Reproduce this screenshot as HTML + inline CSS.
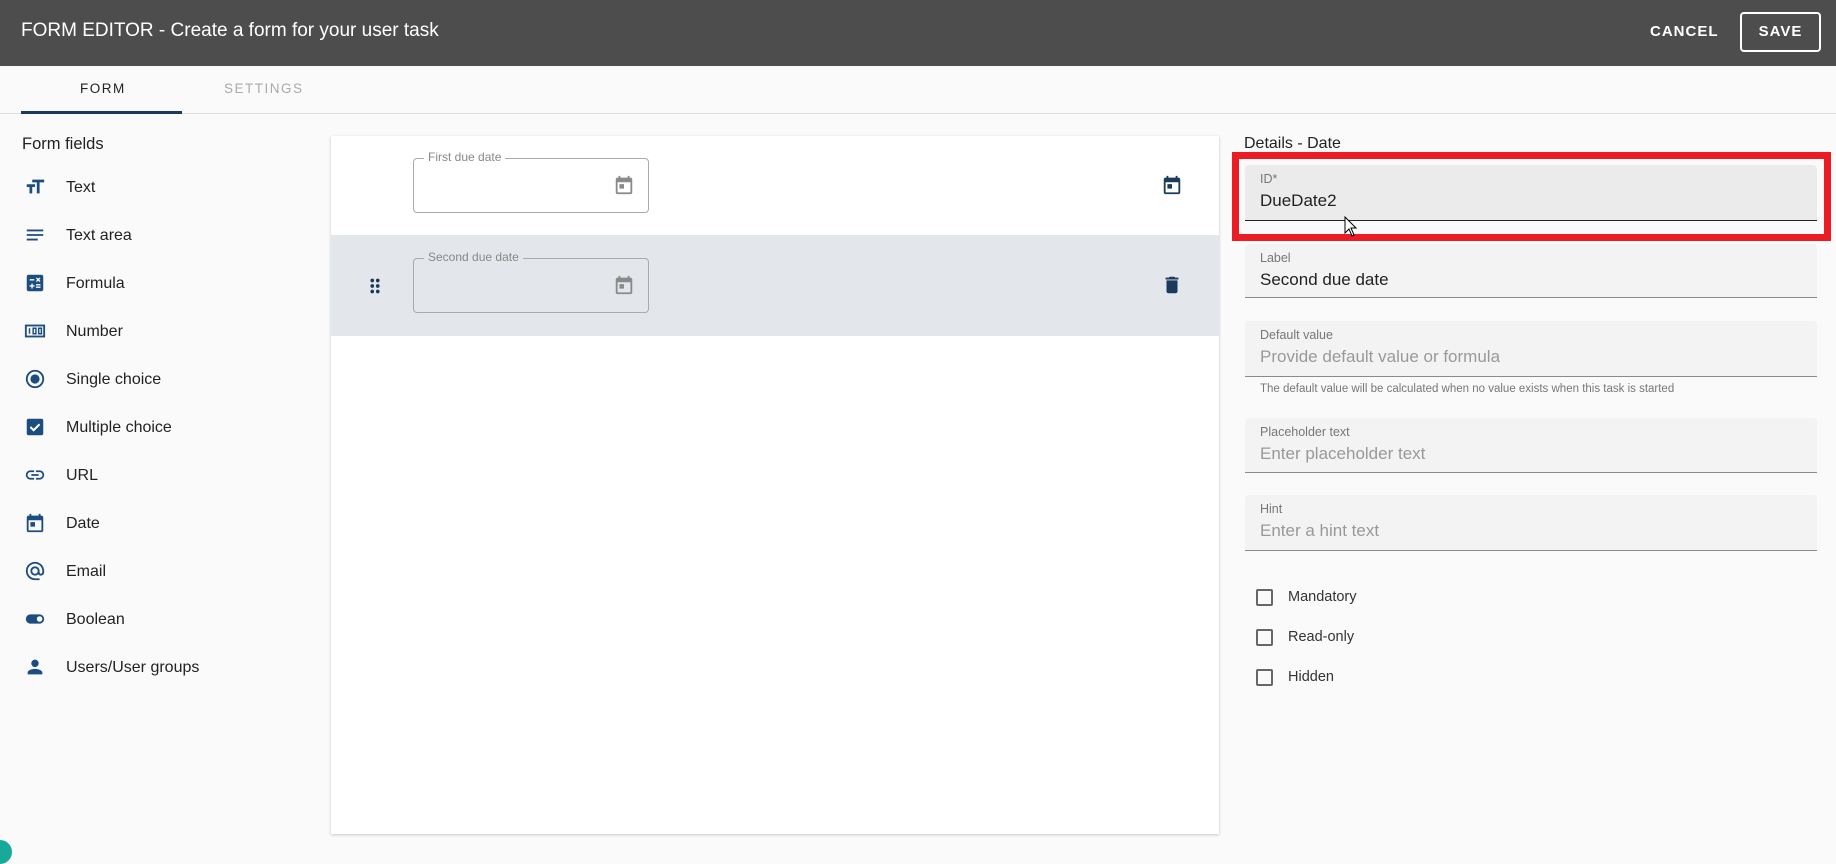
<!DOCTYPE html><html><head><style>
*{box-sizing:border-box;margin:0;padding:0}
body{width:1836px;height:854px;background:#fafafa;font-family:"Liberation Sans",sans-serif;position:relative;overflow:hidden;color:#222}
.a{position:absolute}
.hdr{left:0;top:0;width:1836px;height:66px;background:#4d4d4d}
.fi{left:22px;font-size:16px;color:#222}
.f{left:1245px;width:572px;background:#f3f3f3;border-bottom:1px solid #8a8a8a;border-radius:4px 4px 0 0}
.f .l{position:absolute;left:15px;top:7px;font-size:12.5px;color:#777}
.f .v{position:absolute;left:15px;top:26px;font-size:17px;color:#999}
.cb{left:1256px;width:17px;height:17px;border:2px solid #666;border-radius:2px}
.ct{left:1288px;font-size:14.5px;color:#333}
</style></head><body>
<div class="a hdr"></div>
<div class="a" style="left:21px;top:20px;font-size:19px;color:#fff">FORM EDITOR - Create a form for your user task</div>
<div class="a" style="left:1650px;top:23px;font-size:15px;font-weight:bold;color:#fff;letter-spacing:1px">CANCEL</div>
<div class="a" style="left:1740px;top:12px;width:81px;height:40px;border:2px solid #fff;border-radius:4px;color:#fff;font-size:15px;font-weight:bold;letter-spacing:1px;text-align:center;line-height:36px">SAVE</div>
<div class="a" style="left:80px;top:81px;font-size:13.5px;letter-spacing:1.5px;color:#222">FORM</div>
<div class="a" style="left:224px;top:81px;font-size:13.5px;letter-spacing:1.5px;color:#aaa">SETTINGS</div>
<div class="a" style="left:0;top:113px;width:1836px;height:1px;background:#ddd"></div>
<div class="a" style="left:21px;top:111px;width:161px;height:3px;background:#1b3a5c"></div>
<div class="a fi" style="top:135px;font-size:16.5px">Form fields</div>

<svg class="a" style="left:24px;top:176px" width="22" height="22" viewBox="0 0 24 24" fill="#1b4d7e"><path d="M9 4v3h5v12h3V7h5V4H9zm-6 8h3v7h3v-7h3V9H3v3z"/></svg>
<div class="a fi" style="left:66px;top:179px">Text</div>
<svg class="a" style="left:24px;top:224px" width="22" height="22" viewBox="0 0 24 24" fill="#1b4d7e"><path d="M3 6h18v2H3zM3 11h18v2H3zM3 16h12v2H3z"/></svg>
<div class="a fi" style="left:66px;top:227px">Text area</div>
<svg class="a" style="left:24px;top:272px" width="22" height="22" viewBox="0 0 24 24" fill="#1b4d7e"><path d="M19 3H5c-1.1 0-2 .9-2 2v14c0 1.1.9 2 2 2h14c1.1 0 2-.9 2-2V5c0-1.1-.9-2-2-2zm-5.970 4.060L14.090 6l1.410 1.410L16.910 6l1.060 1.060-1.410 1.410 1.410 1.410-1.060 1.060-1.410-1.400-1.410 1.410-1.060-1.060 1.410-1.410-1.410-1.420zM6.250 7.720h5v1.500h-5v-1.500zM11.500 16h-2v2H8v-2H6v-1.500h2v-2h1.500v2h2V16zm6.500 1.250h-5v-1.500h5v1.500zm0-2.500h-5v-1.500h5v1.500z"/></svg>
<div class="a fi" style="left:66px;top:275px">Formula</div>
<svg class="a" style="left:24px;top:320px" width="22" height="22" viewBox="0 0 24 24" fill="none" stroke="#1b4d7e" stroke-width="2"><rect x="2" y="6" width="20" height="12"/><path d="M6 9v6M10 9h3v6h-3zM16 9h3v6h-3z" stroke-width="1.6"/></svg>
<div class="a fi" style="left:66px;top:323px">Number</div>
<svg class="a" style="left:24px;top:368px" width="22" height="22" viewBox="0 0 24 24"><circle cx="12" cy="12" r="9" fill="none" stroke="#1b4d7e" stroke-width="2"/><circle cx="12" cy="12" r="5" fill="#1b4d7e"/></svg>
<div class="a fi" style="left:66px;top:371px">Single choice</div>
<svg class="a" style="left:24px;top:416px" width="22" height="22" viewBox="0 0 24 24"><rect x="3" y="3" width="18" height="18" rx="2" fill="#1b4d7e"/><path d="M7 12l3.5 3.5L17 9" stroke="#fff" stroke-width="2.2" fill="none"/></svg>
<div class="a fi" style="left:66px;top:419px">Multiple choice</div>
<svg class="a" style="left:24px;top:464px" width="22" height="22" viewBox="0 0 24 24" fill="#1b4d7e"><path d="M3.9 12c0-1.71 1.39-3.1 3.1-3.1h4V7H7c-2.76 0-5 2.24-5 5s2.24 5 5 5h4v-1.9H7c-1.71 0-3.1-1.39-3.1-3.1zM8 13h8v-2H8v2zm9-6h-4v1.9h4c1.71 0 3.1 1.39 3.1 3.1s-1.39 3.1-3.1 3.1h-4V17h4c2.76 0 5-2.24 5-5s-2.240-5-5-5z"/></svg>
<div class="a fi" style="left:66px;top:467px">URL</div>
<svg class="a" style="left:24px;top:512px" width="22" height="22" viewBox="0 0 24 24" fill="#1b4d7e"><path d="M19 4h-1V2h-2v2H8V2H6v2H5c-1.1 0-2 .9-2 2v14c0 1.1.9 2 2 2h14c1.1 0 2-.9 2-2V6c0-1.1-.9-2-2-2zm0 16H5V9h14v11zM7 11h5v5H7z"/></svg>
<div class="a fi" style="left:66px;top:515px">Date</div>
<svg class="a" style="left:24px;top:560px" width="22" height="22" viewBox="0 0 24 24" fill="#1b4d7e"><path d="M12 2C6.48 2 2 6.48 2 12s4.48 10 10 10h5v-2h-5c-4.34 0-8-3.66-8-8s3.66-8 8-8 8 3.66 8 8v1.43c0 .79-.71 1.57-1.5 1.57s-1.5-.78-1.5-1.57V12c0-2.76-2.24-5-5-5s-5 2.24-5 5 2.24 5 5 5c1.38 0 2.64-.56 3.54-1.47.65.89 1.77 1.47 2.96 1.47 1.97 0 3.5-1.6 3.5-3.57V12c0-5.52-4.48-10-10-10zm0 13c-1.66 0-3-1.34-3-3s1.34-3 3-3 3 1.34 3 3-1.34 3-3 3z"/></svg>
<div class="a fi" style="left:66px;top:563px">Email</div>
<svg class="a" style="left:24px;top:608px" width="22" height="22" viewBox="0 0 24 24"><rect x="2" y="7" width="20" height="10" rx="5" fill="#1b4d7e"/><circle cx="17" cy="12" r="3" fill="#fff"/></svg>
<div class="a fi" style="left:66px;top:611px">Boolean</div>
<svg class="a" style="left:24px;top:656px" width="22" height="22" viewBox="0 0 24 24" fill="#1b4d7e"><path d="M12 12c2.21 0 4-1.79 4-4s-1.79-4-4-4-4 1.79-4 4 1.79 4 4 4zm0 2c-2.67 0-8 1.34-8 4v2h16v-2c0-2.66-5.33-4-8-4z"/></svg>
<div class="a fi" style="left:66px;top:659px">Users/User groups</div>

<div class="a" style="left:331px;top:136px;width:888px;height:698px;background:#fff;box-shadow:0 1px 3px rgba(0,0,0,.2)"></div>
<div class="a" style="left:331px;top:235px;width:888px;height:101px;background:#e3e6ea"></div>
<div class="a" style="left:413px;top:158px;width:236px;height:55px;border:1px solid #aaa;border-radius:4px"></div>
<div class="a" style="left:424px;top:150px;padding:0 4px;background:#fff;font-size:12px;color:#888">First due date</div>
<div class="a" style="left:413px;top:258px;width:236px;height:55px;border:1px solid #aaa;border-radius:4px"></div>
<div class="a" style="left:424px;top:250px;padding:0 4px;background:#e3e6ea;font-size:12px;color:#888">Second due date</div>
<svg class="a" style="left:613px;top:174px" width="22" height="22" viewBox="0 0 24 24" fill="#8a8a8a"><path d="M19 4h-1V2h-2v2H8V2H6v2H5c-1.1 0-2 .9-2 2v14c0 1.1.9 2 2 2h14c1.1 0 2-.9 2-2V6c0-1.1-.9-2-2-2zm0 16H5V9h14v11zM7 11h5v5H7z"/></svg>
<svg class="a" style="left:613px;top:274px" width="22" height="22" viewBox="0 0 24 24" fill="#8a8a8a"><path d="M19 4h-1V2h-2v2H8V2H6v2H5c-1.1 0-2 .9-2 2v14c0 1.1.9 2 2 2h14c1.1 0 2-.9 2-2V6c0-1.1-.9-2-2-2zm0 16H5V9h14v11zM7 11h5v5H7z"/></svg>
<svg class="a" style="left:1161px;top:174px" width="22" height="22" viewBox="0 0 24 24" fill="#1b3a5c"><path d="M19 4h-1V2h-2v2H8V2H6v2H5c-1.1 0-2 .9-2 2v14c0 1.1.9 2 2 2h14c1.1 0 2-.9 2-2V6c0-1.1-.9-2-2-2zm0 16H5V9h14v11zM7 11h5v5H7z"/></svg>
<svg class="a" style="left:1161px;top:274px" width="22" height="22" viewBox="0 0 24 24" fill="#1b3a5c"><path d="M6 19c0 1.1.9 2 2 2h8c1.1 0 2-.9 2-2V7H6v12zM19 4h-3.5l-1-1h-5l-1 1H5v2h14V4z"/></svg>
<svg class="a" style="left:364px;top:275px" width="22" height="22" viewBox="0 0 24 24" fill="#1b3a5c"><circle cx="9" cy="6" r="2"/><circle cx="15" cy="6" r="2"/><circle cx="9" cy="12" r="2"/><circle cx="15" cy="12" r="2"/><circle cx="9" cy="18" r="2"/><circle cx="15" cy="18" r="2"/></svg>

<div class="a" style="left:1244px;top:135px;font-size:16px;color:#222">Details - Date</div>
<div class="a f" style="top:165px;height:56px;background:#ebebeb;border-bottom:1.5px solid #222"><div class="l">ID*</div><div class="v" style="color:#222">DueDate2</div></div>
<div class="a f" style="top:244px;height:54px"><div class="l">Label</div><div class="v" style="color:#222">Second due date</div></div>
<div class="a f" style="top:321px;height:56px"><div class="l">Default value</div><div class="v">Provide default value or formula</div></div>
<div class="a" style="left:1260px;top:383px;font-size:11.5px;color:#777">The default value will be calculated when no value exists when this task is started</div>
<div class="a f" style="top:418px;height:55px"><div class="l">Placeholder text</div><div class="v">Enter placeholder text</div></div>
<div class="a f" style="top:495px;height:56px"><div class="l">Hint</div><div class="v">Enter a hint text</div></div>
<div class="a" style="left:1232px;top:152px;width:599px;height:89px;border:7px solid #ec1c24"></div>
<svg class="a" style="left:1344px;top:216px" width="14" height="22" viewBox="0 0 14 22"><path d="M1 1v16l4-4 3 7 2-1-3-7h5z" fill="#fff" stroke="#000" stroke-width="1"/></svg>

<div class="a cb" style="top:589px"></div><div class="a ct" style="top:589px">Mandatory</div>
<div class="a cb" style="top:629px"></div><div class="a ct" style="top:629px">Read-only</div>
<div class="a cb" style="top:669px"></div><div class="a ct" style="top:669px">Hidden</div>
<div class="a" style="left:-12px;top:840px;width:24px;height:24px;border-radius:50%;background:#17a99a"></div>
</body></html>
